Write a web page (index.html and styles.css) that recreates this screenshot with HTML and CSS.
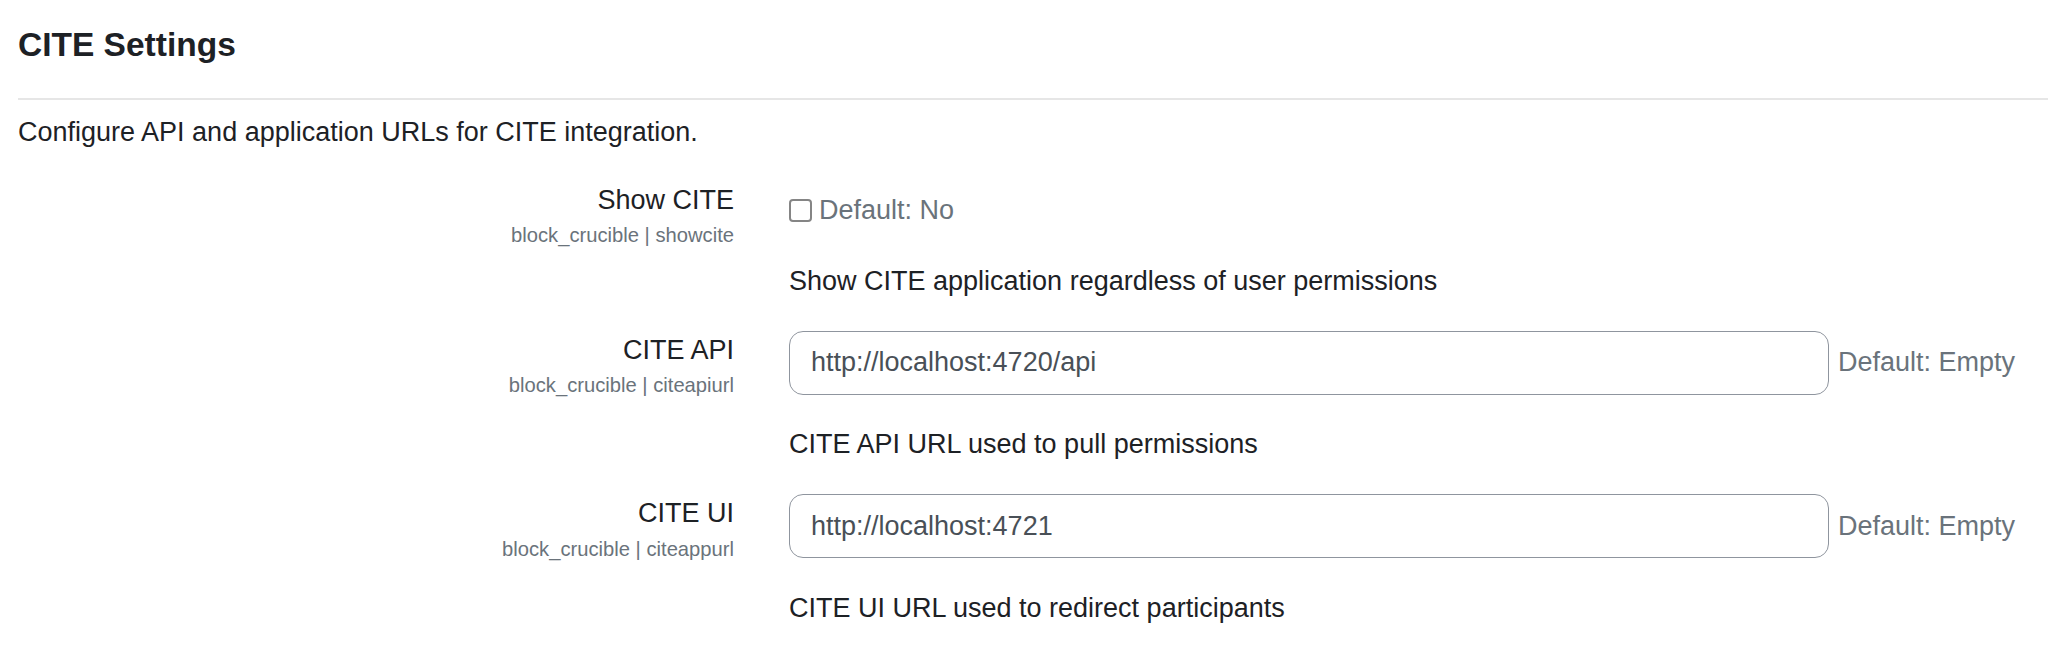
FILE: index.html
```html
<!DOCTYPE html>
<html lang="en">
<head>
<meta charset="utf-8">
<title>CITE Settings</title>
<link rel="stylesheet" href="styles.css">
</head>
<body>
<div class="page">
  <h3 class="title">CITE Settings</h3>
  <hr class="rule">
  <p class="intro">Configure API and application URLs for CITE integration.</p>

  <div class="setting">
    <div class="setting-label">
      <label class="label" for="showcite">Show CITE</label>
      <span class="shortname">block_crucible | showcite</span>
    </div>
    <div class="setting-control">
      <div class="control-line control-line-check">
        <input type="checkbox" id="showcite" class="check">
        <span class="defaultinfo">Default: No</span>
      </div>
      <p class="description description-check">Show CITE application regardless of user permissions</p>
    </div>
  </div>

  <div class="setting">
    <div class="setting-label">
      <label class="label" for="citeapiurl">CITE API</label>
      <span class="shortname">block_crucible | citeapiurl</span>
    </div>
    <div class="setting-control">
      <div class="control-line">
        <input type="text" id="citeapiurl" class="text-input" value="http://localhost:4720/api">
        <span class="defaultinfo">Default: Empty</span>
      </div>
      <p class="description">CITE API URL used to pull permissions</p>
    </div>
  </div>

  <div class="setting">
    <div class="setting-label">
      <label class="label" for="citeappurl">CITE UI</label>
      <span class="shortname">block_crucible | citeappurl</span>
    </div>
    <div class="setting-control">
      <div class="control-line">
        <input type="text" id="citeappurl" class="text-input" value="http://localhost:4721">
        <span class="defaultinfo">Default: Empty</span>
      </div>
      <p class="description">CITE UI URL used to redirect participants</p>
    </div>
  </div>
</div>
</body>
</html>
```
FILE: styles.css
```css
html, body {
  margin: 0;
  padding: 0;
  background: #ffffff;
}

body {
  font-family: "Liberation Sans", Arial, sans-serif;
  font-size: 27px;
  line-height: 39.4px;
  color: #1d2125;
}

.page {
  padding: 25px 0 0 18px;
}

.title {
  margin: 0;
  font-size: 33.5px;
  line-height: 39.4px;
  font-weight: 700;
  color: #1d2125;
}

.rule {
  margin: 33.6px 0 13.2px 0;
  border: 0;
  height: 2px;
  background: #e6e6e6;
}

.intro {
  margin: 0 0 28px 0;
}

.setting {
  display: grid;
  grid-template-columns: 716px 1fr;
  column-gap: 55px;
  margin-bottom: 4px;
}

.setting-label {
  text-align: right;
}

.label {
  display: block;
  color: #1d2125;
}

.shortname {
  display: block;
  font-size: 20.2px;
  line-height: 31.5px;
  color: #6a737b;
}

.setting-control {
  min-width: 0;
}

.control-line {
  display: flex;
  align-items: center;
  gap: 9px;
}

.control-line-check {
  padding-top: 10px;
  gap: 7px;
}

.check {
  appearance: none;
  -webkit-appearance: none;
  margin: 0;
  width: 23px;
  height: 23px;
  box-sizing: border-box;
  border: 2px solid #858585;
  border-radius: 4px;
  background: #ffffff;
  flex: none;
}

.defaultinfo {
  color: #6a737b;
  white-space: nowrap;
}

.text-input {
  box-sizing: border-box;
  width: 1040px;
  height: 64px;
  margin: 0;
  padding: 0 21px;
  border: 1px solid #8f959e;
  border-radius: 14px;
  background: #ffffff;
  font-family: "Liberation Sans", Arial, sans-serif;
  font-size: 27px;
  color: #495057;
  flex: none;
  outline: none;
}

.description {
  margin: 30.5px 0 25.5px 0;
  color: #1d2125;
}

.description-check {
  margin-top: 32px;
}
```
